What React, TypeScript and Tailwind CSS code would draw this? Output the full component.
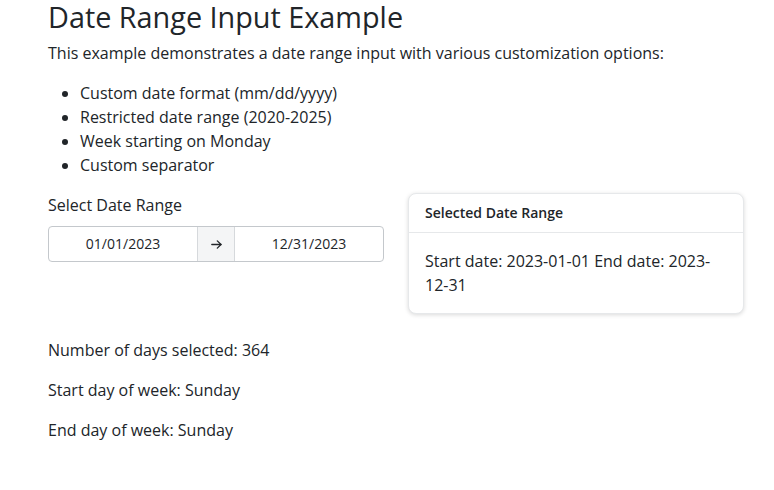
import React from "react";

function DateRangeInput() {
  return (
    <div className="flex h-9 w-full rounded border border-[#c4c8cc] text-sm text-[#212529]">
      <div className="flex flex-1 items-center justify-center">01/01/2023</div>
      <div className="flex w-[38px] items-center justify-center border-x border-[#d6d9dc] bg-[#f4f5f6]">
        <svg width="11" height="9" viewBox="0 0 11 9" fill="none" stroke="#212529" strokeWidth="1.3" strokeLinecap="round" strokeLinejoin="round">
          <path d="M0.8 4.5H10" />
          <path d="M6.3 0.9L10 4.5L6.3 8.1" />
        </svg>
      </div>
      <div className="flex flex-1 items-center justify-center">12/31/2023</div>
    </div>
  );
}

export default function App() {
  return (
    <div className="min-h-screen bg-white px-12 text-[#212529] font-['Open_Sans',sans-serif]">
      <h1 className="text-[28.8px] leading-[34px] font-normal">Date Range Input Example</h1>
      <p className="mt-[7px] text-base leading-6">
        This example demonstrates a date range input with various customization options:
      </p>
      <ul className="mt-4 list-disc pl-8 text-base leading-6">
        <li>Custom date format (mm/dd/yyyy)</li>
        <li>Restricted date range (2020-2025)</li>
        <li>Week starting on Monday</li>
        <li>Custom separator</li>
      </ul>

      <div className="mt-4 grid w-[696px] grid-cols-2 gap-6">
        <div>
          <label className="block text-base leading-6">Select Date Range</label>
          <div className="mt-[9px]">
            <DateRangeInput />
          </div>
        </div>
        <div className="rounded-lg border border-[#e6e8ea] bg-white shadow-[0_1px_4px_rgba(0,0,0,0.15)]">
          <div className="border-b border-[#e6e8ea] px-4 py-[9px] text-sm leading-5 font-semibold">
            Selected Date Range
          </div>
          <div className="p-4 text-base leading-6">
            Start date: 2023-01-01 End date: 2023-12-31
          </div>
        </div>
      </div>

      <div className="mt-6 space-y-4 text-base leading-6">
        <p>Number of days selected: 364</p>
        <p>Start day of week: Sunday</p>
        <p>End day of week: Sunday</p>
      </div>
    </div>
  );
}
